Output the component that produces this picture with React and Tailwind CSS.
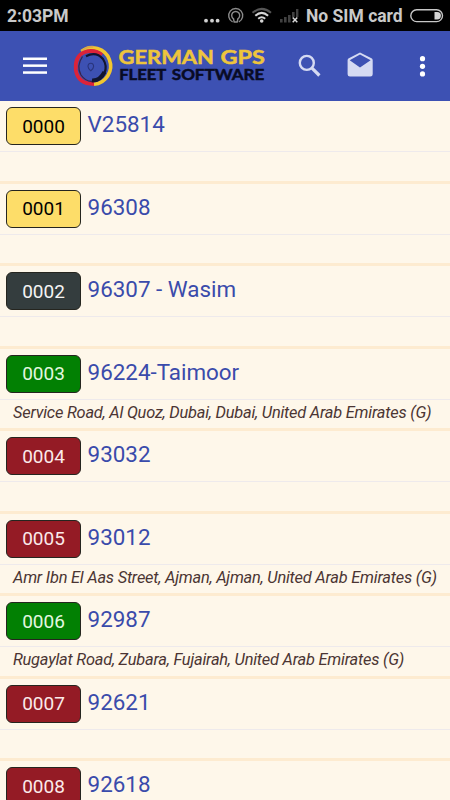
const vehicles = [
  { id: '0000', name: 'V25814', tone: 'bg-[#fddd69] text-black' },
  { id: '0001', name: '96308', tone: 'bg-[#fddd69] text-black' },
  { id: '0002', name: '96307 - Wasim', tone: 'bg-[#343d3e] text-[#f4f4f4]' },
  { id: '0003', name: '96224-Taimoor', tone: 'bg-[#028003] text-[#e4f8e0]', address: 'Service Road, Al Quoz, Dubai, Dubai, United Arab Emirates (G)' },
  { id: '0004', name: '93032', tone: 'bg-[#941b25] text-[#fbeaea]' },
  { id: '0005', name: '93012', tone: 'bg-[#941b25] text-[#fbeaea]', address: 'Amr Ibn El Aas Street, Ajman, Ajman, United Arab Emirates (G)' },
  { id: '0006', name: '92987', tone: 'bg-[#028003] text-[#e4f8e0]', address: 'Rugaylat Road, Zubara, Fujairah, United Arab Emirates (G)' },
  { id: '0007', name: '92621', tone: 'bg-[#941b25] text-[#fbeaea]' },
  { id: '0008', name: '92618', tone: 'bg-[#941b25] text-[#fbeaea]' },
];

function StatusIcons() {
  return (
    <svg className="h-[31px] w-[100px]" viewBox="204 0 100 31" fill="none">
      <g fill="#d2d2d2">
        <circle cx="206" cy="20.7" r="1.9" />
        <circle cx="212" cy="20.7" r="1.9" />
        <circle cx="217.6" cy="20.7" r="1.9" />
      </g>
      <g stroke="#8b8b8b" strokeWidth="1.4">
        <path d="M232.6 21.8A7 7 0 1 1 238.8 21.8" />
        <path d="M233.5 18.8A4 4 0 1 1 237.9 18.8L237.2 22H234.2Z" />
      </g>
      <path d="M252.5 12.8Q261.7 5 271 12.8" stroke="#555" strokeWidth="2" />
      <path d="M255.3 15.8Q261.7 10 268.1 15.8M258.2 18.7Q261.7 15.7 265.2 18.7" stroke="#d5d5d5" strokeWidth="2" />
      <circle cx="261.7" cy="21" r="1.8" fill="#d5d5d5" />
      <g fill="#414141">
        <rect x="280" y="19" width="2.6" height="3.5" />
        <rect x="284" y="17" width="2.6" height="5.5" />
        <rect x="288" y="15" width="2.6" height="7.5" />
        <rect x="292" y="12" width="2.6" height="5" />
        <rect x="296" y="9" width="2.4" height="8" />
      </g>
      <path d="m292.7 17.5 4.6 4.8m0-4.8-4.6 4.8" stroke="#d8d8d8" strokeWidth="1.5" />
    </svg>
  );
}

function StatusBar() {
  return (
    <div className="flex h-[31px] w-[450px] shrink-0 items-center bg-black text-[17.5px] font-bold text-[#c9c9c9]">
      <span className="w-[204px] pl-[7px] pt-[2px]">2:03PM</span>
      <StatusIcons />
      <span className="w-[105px] whitespace-nowrap pl-[2px] pt-[2px]">No SIM card</span>
      <svg className="h-[31px] w-[41px]" viewBox="409 0 41 31" fill="none">
        <rect x="410.8" y="9.8" width="31.7" height="11.8" rx="5.9" stroke="#c7c7c7" strokeWidth="1.4" />
        <path d="M434.5 12h2.7a3.7 3.7 0 0 1 0 7.4h-2.7Z" fill="#d5d5d5" />
      </svg>
    </div>
  );
}

function Logo() {
  return (
    <svg className="ml-[25px] h-[70px] w-[196px]" viewBox="72 31 196 70" fill="none" aria-label="German GPS Fleet Software">
      <path d="M81.5 51.5A18.2 18.2 0 1 1 94 84.2" stroke="#f1c62f" strokeWidth="3.6" />
      <path d="M81.5 51.5Q86 46 93.3 46.8" stroke="#d9a94a" strokeWidth="2" />
      <path d="M94 84Q78 84 75.8 70C75 60 79 54 85 52Q94 49 102 55" stroke="#dc2339" strokeWidth="3.8" />
      <path d="M86 56.2Q96 51 103 59Q107.5 66 104.5 73" stroke="#11152f" strokeWidth="2.2" />
      <path d="M92 80.5Q100 81 104.5 72" stroke="#11152f" strokeWidth="4" />
      <path d="M82.5 56.5Q76 66 81 75Q85 81 92 81.5" stroke="#3a234a" strokeWidth="1.3" />
      <path d="M88 66.5q0-3.3 2.8-3.3t2.8 3.3q0 2-2.8 4.3-2.8-2.3-2.8-4.3Z" stroke="#29347c" strokeWidth="1.1" />
      <g className="font-['Lato'] font-bold" strokeWidth="0.5">
        <g fontSize="19.4" fill="#eec53c" stroke="#eec53c">
          <text x="118.5" y="63.8" textLength="95.5" lengthAdjust="spacingAndGlyphs">GERMAN</text>
          <text x="220.5" y="63.8" textLength="44.3" lengthAdjust="spacingAndGlyphs">GPS</text>
        </g>
        <g fontSize="15.4" fill="#080b24" stroke="#080b24">
          <text x="119.2" y="80.3" textLength="47" lengthAdjust="spacingAndGlyphs">FLEET</text>
          <text x="171.8" y="80.3" textLength="92.5" lengthAdjust="spacingAndGlyphs">SOFTWARE</text>
        </g>
      </g>
    </svg>
  );
}

function AppBar() {
  return (
    <header className="flex h-[70px] shrink-0 items-center bg-[#3d51b3]">
      <svg className="ml-[23px] h-[70px] w-6" viewBox="0 0 24 70" fill="#fff">
        <rect y="26.5" width="24" height="2.5" />
        <rect y="33.4" width="24" height="2.5" />
        <rect y="40.3" width="24" height="2.5" />
      </svg>
      <Logo />
      <svg className="ml-[12px] h-[70px] w-[170px]" viewBox="280 31 170 70" fill="none">
        <circle cx="306.8" cy="62.9" r="7" stroke="#d5daf2" strokeWidth="2.4" />
        <path d="m312 68.1 7.4 7.4" stroke="#d5daf2" strokeWidth="3.2" />
        <path fillRule="evenodd" fill="#d5daf2" d="M347.6 60.3Q347.6 59 348.8 58.3L360 52.4 371.5 58.3Q372.7 59 372.7 60.3V74.2Q372.7 76.6 370.3 76.6H350Q347.6 76.6 347.6 74.2ZM349.7 60.2 360 67.4 370.6 60.2 360 54.6Z" />
        <g fill="#fff">
          <circle cx="422.5" cy="58.7" r="2.6" />
          <circle cx="422.5" cy="66.3" r="2.6" />
          <circle cx="422.5" cy="73.9" r="2.6" />
        </g>
      </svg>
    </header>
  );
}

function VehicleRow({ id, name, tone, address }) {
  return (
    <li className="flex h-[82.5px] shrink-0 flex-col border-b-[3px] border-[#fdebd0]">
      <div className="flex h-[51px] shrink-0 items-start border-b border-[#eeeaec] pl-[6px] pt-[6px]">
        <span className={`flex h-[38px] w-[75px] items-center justify-center rounded-[6px] border border-[#25251f] text-[19px] leading-none ${tone}`}>
          {id}
        </span>
        <span className="ml-[6.6px] text-[22.4px] leading-[34.2px] text-[#3a4bab]">{name}</span>
      </div>
      {address && (
        <p className="whitespace-nowrap pl-[13px] text-[16.4px] leading-[25.4px] tracking-[-0.22px] text-[#4b3533] italic">{address}</p>
      )}
    </li>
  );
}

export default function App() {
  return (
    <div className="flex h-[800px] w-[450px] flex-col overflow-hidden bg-[#fef7ea] font-['Roboto',sans-serif]">
      <StatusBar />
      <AppBar />
      <ul className="flex min-h-0 flex-1 flex-col overflow-hidden">
        {vehicles.map((v) => (
          <VehicleRow key={v.id} {...v} />
        ))}
      </ul>
    </div>
  );
}
